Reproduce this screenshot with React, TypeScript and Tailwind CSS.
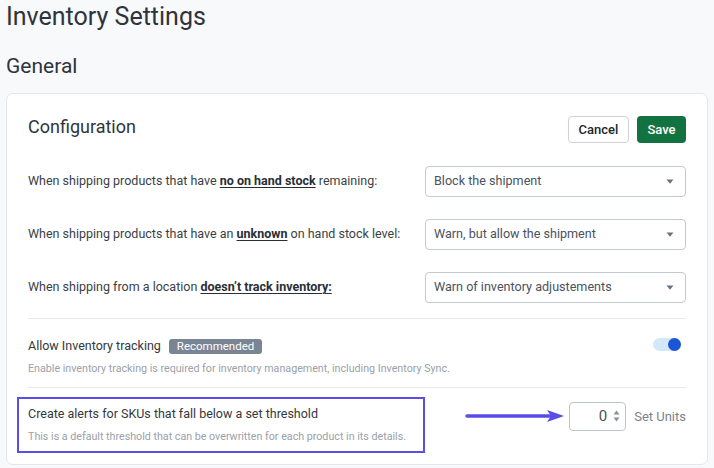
const rules = [
  {
    before: "When shipping products that have ",
    strong: "no on hand stock",
    after: " remaining:",
    value: "Block the shipment",
  },
  {
    before: "When shipping products that have an ",
    strong: "unknown",
    after: " on hand stock level:",
    value: "Warn, but allow the shipment",
  },
  {
    before: "When shipping from a location ",
    strong: "doesn\u2019t track inventory:",
    after: "",
    value: "Warn of inventory adjustements",
  },
];

function Caret() {
  return (
    <svg width="8" height="5" viewBox="0 0 8 5" className="shrink-0">
      <path d="M0.5 0.5 L7.5 0.5 L4 4.8 Z" fill="#6b7280" />
    </svg>
  );
}

function SelectBox({ value }: { value: string }) {
  return (
    <div className="flex h-[31px] w-[261px] items-center justify-between rounded-[4px] border border-[#c5cad1] bg-white pl-[8px] pr-[11px] text-[12.6px] text-[#4b5260]">
      <span>{value}</span>
      <Caret />
    </div>
  );
}

export default function App() {
  return (
    <div
      className="min-h-[468px] bg-[#f8f9fa] px-[6px] text-[#3a3f46]"
      style={{ fontFamily: "Roboto, 'Liberation Sans', sans-serif" }}
    >
      <h1 className="pt-[1px] text-[25px] leading-[32px] text-[#2f343a]">Inventory Settings</h1>
      <h2 className="mt-[19px] text-[21px] leading-[28px] text-[#2f343a]">General</h2>

      <div className="mt-[13px] rounded-[7px] border border-[#e3e6ea] bg-white px-[21px] pb-[11px] pt-[22px]">
        {/* Header */}
        <div className="flex items-center justify-between">
          <h3 className="-mt-[6px] text-[18px] leading-[24px] text-[#2f343a]">Configuration</h3>
          <div className="flex gap-[8px]">
            <button className="h-[27px] w-[61px] rounded-[4px] border border-[#cfd3d8] bg-white text-[13px] font-medium text-[#22262b]">
              Cancel
            </button>
            <button className="h-[27px] w-[49px] rounded-[4px] bg-[#137340] text-[13px] font-medium text-white">
              Save
            </button>
          </div>
        </div>

        {/* Rules */}
        <div className="mt-[23px] flex flex-col gap-[22px]">
          {rules.map((r) => (
            <div key={r.value} className="flex items-center justify-between">
              <p className="text-[12.5px] text-[#3a3f46]">
                {r.before}
                <span className="font-bold text-[#2a2f35] underline underline-offset-2">{r.strong}</span>
                {r.after}
              </p>
              <SelectBox value={r.value} />
            </div>
          ))}
        </div>

        <div className="mt-[15px] border-t border-[#e6e8eb]" />

        {/* Inventory tracking */}
        <div className="flex items-start justify-between pb-[10px] pt-[18px]">
          <div>
            <div className="flex items-center gap-[8px]">
              <span className="text-[12.5px] text-[#33383e]">Allow Inventory tracking</span>
              <span className="rounded-[3px] bg-[#7a8593] px-[8px] text-[11.5px] leading-[15px] text-white">
                Recommended
              </span>
            </div>
            <p className="mt-[5px] text-[10.7px] text-[#9aa1a9]">
              Enable inventory tracking is required for inventory management, including Inventory Sync.
            </p>
          </div>
          <div className="mr-[5px] mt-[1px] flex h-[13px] w-[28px] items-center justify-end rounded-full bg-[#d4e8fc]">
            <div className="h-[13px] w-[13px] rounded-full bg-[#1a56d6]" />
          </div>
        </div>

        <div className="border-t border-[#e6e8eb]" />

        {/* Threshold */}
        <div className="mt-[9px] flex items-start">
          <div className="-ml-[11px] w-[408px] border-2 border-[#5b4ee6] px-[9px] pb-[6px] pt-[6px]">
            <p className="text-[12.5px] text-[#33383e]">Create alerts for SKUs that fall below a set threshold</p>
            <p className="mt-[5px] text-[10.7px] text-[#9aa1a9]">
              This is a default threshold that can be overwritten for each product in its details.
            </p>
          </div>
          <div className="ml-auto mt-[5px] flex items-center">
            <svg width="100" height="14" viewBox="0 0 100 14" className="mr-[4px]">
              <path d="M2 7 H86" stroke="#5b4ee6" strokeWidth="3.5" strokeLinecap="round" />
              <path d="M82 1 L99 7 L82 13 L86 7 Z" fill="#5b4ee6" />
            </svg>
            <div className="flex h-[29px] w-[57px] items-center justify-end gap-[6px] rounded-[4px] border border-[#bfc5cc] bg-white pr-[5px] text-[15px] text-[#4b5260]">
              <span>0</span>
              <div className="flex flex-col items-center gap-[2px]">
                <svg width="7" height="5" viewBox="0 0 7 5">
                  <path d="M3.5 0.5 L6.5 4.5 L0.5 4.5 Z" fill="#8a9098" />
                </svg>
                <svg width="7" height="5" viewBox="0 0 7 5">
                  <path d="M0.5 0.5 L6.5 0.5 L3.5 4.5 Z" fill="#8a9098" />
                </svg>
              </div>
            </div>
            <span className="ml-[8px] text-[13px] text-[#7b828b]">Set Units</span>
          </div>
        </div>
      </div>
    </div>
  );
}
